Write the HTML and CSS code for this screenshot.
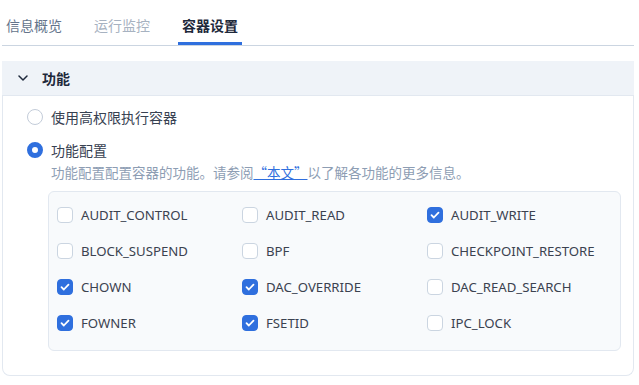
FILE: index.html
```html
<!DOCTYPE html>
<html lang="zh-CN">
<head>
    <meta charset="UTF-8">
    <meta name="viewport" content="width=device-width, initial-scale=1.0">
    <title>容器设置</title>
    <link rel="stylesheet" href="styles.css">
</head>
<body>
    <div class="tabs">
        <div class="tab">信息概览</div>
        <div class="tab tab-disabled">运行监控</div>
        <div class="tab tab-active">容器设置</div>
    </div>

    <div class="panel">
        <div class="panel-header">
            <svg class="chevron" width="10" height="6" viewBox="0 0 10 6">
                <path d="M1 1l4 4 4-4" fill="none" stroke="#1e293b" stroke-width="1.5" stroke-linecap="round" stroke-linejoin="round"/>
            </svg>
            <span>功能</span>
        </div>

        <div class="panel-body">
            <label class="radio-row">
                <span class="radio"></span>
                使用高权限执行容器
            </label>
            <label class="radio-row">
                <span class="radio checked"></span>
                功能配置
            </label>
            <div class="hint">功能配置配置容器的功能。请参阅<a href="#">“本文”</a>以了解各功能的更多信息。</div>

            <div class="caps">
                <label class="cap"><span class="box"></span>AUDIT_CONTROL</label>
                <label class="cap"><span class="box"></span>AUDIT_READ</label>
                <label class="cap"><span class="box checked"></span>AUDIT_WRITE</label>
                <label class="cap"><span class="box"></span>BLOCK_SUSPEND</label>
                <label class="cap"><span class="box"></span>BPF</label>
                <label class="cap"><span class="box"></span>CHECKPOINT_RESTORE</label>
                <label class="cap"><span class="box checked"></span>CHOWN</label>
                <label class="cap"><span class="box checked"></span>DAC_OVERRIDE</label>
                <label class="cap"><span class="box"></span>DAC_READ_SEARCH</label>
                <label class="cap"><span class="box checked"></span>FOWNER</label>
                <label class="cap"><span class="box checked"></span>FSETID</label>
                <label class="cap"><span class="box"></span>IPC_LOCK</label>
            </div>
        </div>
    </div>
</body>
</html>
```

FILE: styles.css
```css
body {
    margin: 0;
    font-family: 'Noto Sans', 'Noto Sans CJK SC', sans-serif;
    font-size: 14px;
    color: #374151;
    background: white;
}

.tabs {
    display: flex;
    gap: 24px;
    margin-left: 2px;
    width: 632px;
    border-bottom: 1px solid #cbd5e1;
}

.tab {
    box-sizing: border-box;
    height: 45px;
    padding: 16px 4px 0;
    line-height: 20px;
    color: #64748b;
    border-bottom: 3px solid transparent;
}

.tab-disabled {
    color: #a7b2c1;
}

.tab-active {
    color: #1e293b;
    font-weight: 600;
    border-bottom-color: #2f6fde;
}

.panel {
    margin: 15px 0 0 2px;
    width: 632px;
}

.panel-header {
    display: flex;
    align-items: center;
    gap: 14px;
    height: 34px;
    padding-left: 16px;
    background: #eff3f8;
    border-bottom: 1px solid #e2e8f0;
    font-weight: 700;
    color: #1e293b;
}

.chevron {
    display: block;
}

.panel-body {
    padding: 10px 12px 24px 24px;
    border: 1px solid #e2e8f0;
    border-top: none;
    border-radius: 0 0 8px 8px;
}

.radio-row {
    display: flex;
    align-items: center;
    gap: 8px;
    height: 22px;
    color: #374151;
}

.radio-row + .radio-row {
    margin-top: 11px;
}

.radio {
    box-sizing: border-box;
    width: 16px;
    height: 16px;
    border: 1px solid #c3ccd9;
    border-radius: 50%;
    background: white;
}

.radio.checked {
    border: 5px solid #2f6fde;
}

.hint {
    margin: 1px 0 0 24px;
    line-height: 20px;
    font-family: 'Noto Sans CJK SC', sans-serif;
    font-size: 13.5px;
    color: #8d9db3;
}

.hint a {
    color: #2f6fde;
}

.caps {
    display: grid;
    grid-template-columns: repeat(3, 1fr);
    margin: 9px 0 0 21px;
    padding: 5px 8px 9px;
    background: #f8fafc;
    border: 1px solid #e2e8f0;
    border-radius: 6px;
}

.cap {
    display: flex;
    align-items: center;
    gap: 8px;
    height: 36px;
    font-size: 13.2px;
    color: #3b4250;
}

.box {
    box-sizing: border-box;
    width: 16px;
    height: 16px;
    border: 1px solid #cbd5e1;
    border-radius: 4px;
    background: white;
}

.box.checked {
    border-color: #2f6fde;
    background: #2f6fde url("data:image/svg+xml,%3Csvg xmlns='http://www.w3.org/2000/svg' viewBox='0 0 16 16'%3E%3Cpath d='M4.5 8.2l2.3 2.3 4.7-4.9' fill='none' stroke='white' stroke-width='1.8' stroke-linecap='round' stroke-linejoin='round'/%3E%3C/svg%3E") center / 16px 16px no-repeat;
}
```
